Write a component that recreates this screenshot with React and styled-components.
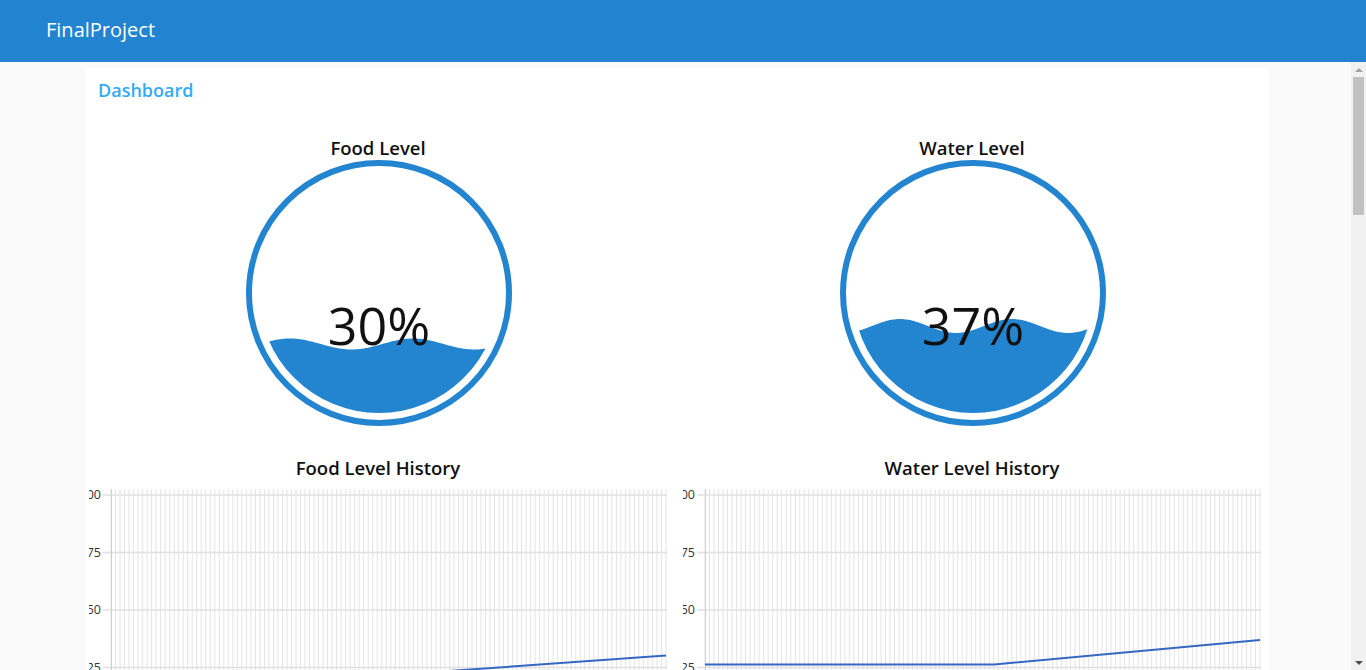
import React from 'react';
import styled, { createGlobalStyle } from 'styled-components';

const GlobalStyle = createGlobalStyle`
    html, body {
        margin: 0;
        padding: 0;
        height: 100%;
        overflow: hidden;
    }
    body {
        font-family: "Open Sans", "Noto Sans", sans-serif;
        color: #111;
    }
`;

const BLUE = '#2384d0';

const Page = styled.div`
    display: flex;
    flex-direction: column;
    height: 670px;
`;

const TopBar = styled.header`
    flex: 0 0 62px;
    display: flex;
    align-items: center;
    padding: 0 0 4px 46px;
    background: #2283d0;
    color: #fff;
    font-size: 20px;
    box-sizing: border-box;
`;

const Body = styled.div`
    flex: 1;
    display: flex;
    min-height: 0;
`;

const Content = styled.main`
    flex: 1;
    overflow: hidden;
    background: #fafafa;
    padding: 6px 0 0 85px;
`;

// scroll rail drawn beside the content (the browser hides native bars in screenshots)
const Rail = styled.div`
    flex: 0 0 15px;
    display: flex;
    flex-direction: column;
    align-items: center;
    background: #f1f1f1;
`;

const RailButton = styled.div`
    flex: 0 0 15px;
    display: flex;
    align-items: center;
    justify-content: center;

    &::before {
        content: '';
        width: 0;
        height: 0;
        border-left: 4px solid transparent;
        border-right: 4px solid transparent;
        ${(p) =>
            p.$down
                ? 'border-top: 4px solid #505050;'
                : 'border-bottom: 4px solid #a3a3a3;'}
    }
`;

const Thumb = styled.div`
    width: 11px;
    height: 138px;
    background: #c1c1c1;
`;

const RailSpace = styled.div`
    flex: 1;
`;

const Card = styled.section`
    width: 1184px;
    min-height: 2530px;
    box-sizing: border-box;
    padding: 10px 8px 0 4px;
    background: #fff;
`;

const GroupTitle = styled.h2`
    margin: 0 0 35px 9px;
    font-size: 18px;
    line-height: 24px;
    font-weight: 600;
    color: #33abf3;
`;

const Grid = styled.div`
    display: grid;
    grid-template-columns: 578px 578px;
    column-gap: 16px;
    row-gap: 30px;
`;

const Cell = styled.div`
    display: flex;
    flex-direction: column;
    align-items: center;

    svg {
        display: block;
    }
`;

const WidgetTitle = styled.div`
    font-size: 18.5px;
    line-height: 22px;
    font-weight: 600;
    color: #111;
`;

const GaugeBox = styled.div`
    padding-left: 2px;
`;

const wavePath = (mid, amp, len, peak) => {
    let d = `M 0 ${mid - amp * Math.cos((2 * Math.PI * (0 - peak)) / len)}`;
    for (let x = 2; x <= 270; x += 2) {
        const y = mid - amp * Math.cos((2 * Math.PI * (x - peak)) / len);
        d += ` L ${x} ${y.toFixed(2)}`;
    }
    return d + ' L 270 270 L 0 270 Z';
};

const Gauge = ({ id, value, mid, amp, len, peak }) => (
    <GaugeBox>
        <svg width="270" height="268" viewBox="0 0 270 268">
            <defs>
                <clipPath id={id}>
                    <circle cx="135" cy="134" r="120" />
                </clipPath>
            </defs>
            <circle cx="135" cy="134" r="130" fill="none" stroke={BLUE} strokeWidth="6" />
            <path d={wavePath(mid, amp, len, peak)} fill={BLUE} clipPath={`url(#${id})`} />
            <text
                x="135"
                y="186"
                textAnchor="middle"
                fontSize="52"
                fontFamily="Open Sans, sans-serif"
                fill="#111"
            >
                {value}%
            </text>
        </svg>
    </GaugeBox>
);

// chart scale: value 100 at y=16, 0 at y=246
const yOf = (v) => 246 - v * 2.3;

const Chart = ({ points }) => {
    const verticals = [];
    for (let i = 0; i < 124; i++) {
        const x = 22 + i * (555 / 123);
        verticals.push(<line key={i} x1={x} x2={x} y1="10" y2="251" stroke="#e4e4e4" strokeWidth="1" />);
    }
    return (
        <svg width="578" height="300" viewBox="0 0 578 300">
            {verticals}
            {[100, 75, 50, 25, 0].map((v) => (
                <g key={v}>
                    <line x1="14" x2="578" y1={yOf(v)} y2={yOf(v)} stroke="#e0e0e0" strokeWidth="1.5" />
                    <text
                        x="12"
                        y={yOf(v) + 4}
                        textAnchor="end"
                        fontSize="12.5"
                        fontFamily="Open Sans, sans-serif"
                        fill="#333"
                    >
                        {v}
                    </text>
                </g>
            ))}
            <line x1="22.5" x2="22.5" y1="10" y2="251" stroke="#cfcfcf" strokeWidth="1" />
            <polyline
                points={points.map(([x, v]) => `${x},${yOf(v).toFixed(1)}`).join(' ')}
                fill="none"
                stroke="#3568c2"
                strokeWidth="2"
            />
        </svg>
    );
};

const App = () => {
    return (
        <Page>
            <GlobalStyle />
            <TopBar>FinalProject</TopBar>
            <Body>
                <Content>
                    <Card>
                        <GroupTitle>Dashboard</GroupTitle>
                        <Grid>
                            <Cell>
                                <WidgetTitle>Food Level</WidgetTitle>
                                <Gauge id="food" value={30} mid={185} amp={5.5} len={123} peak={46} />
                            </Cell>
                            <Cell>
                                <WidgetTitle>Water Level</WidgetTitle>
                                <Gauge id="water" value={37} mid={167} amp={7} len={112} peak={62} />
                            </Cell>
                            <Cell>
                                <WidgetTitle>Food Level History</WidgetTitle>
                                <Chart points={[[22, 13], [577, 30.2]]} />
                            </Cell>
                            <Cell>
                                <WidgetTitle>Water Level History</WidgetTitle>
                                <Chart points={[[22, 26.3], [311, 26.3], [577, 37]]} />
                            </Cell>
                        </Grid>
                    </Card>
                </Content>
                <Rail>
                    <RailButton />
                    <Thumb />
                    <RailSpace />
                    <RailButton $down />
                </Rail>
            </Body>
        </Page>
    );
};

export default App;
